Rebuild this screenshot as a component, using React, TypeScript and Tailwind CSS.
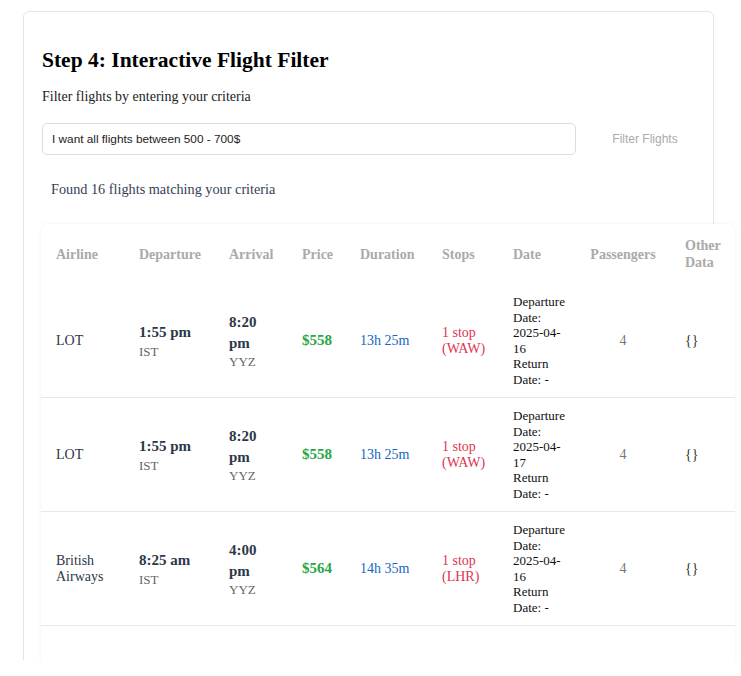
type Flight = {
  airline: string;
  depTime: string;
  depCode: string;
  arrTime: string;
  arrCode: string;
  price: string;
  duration: string;
  stops: string;
  date: string;
  passengers: number;
};

const flights: Flight[] = [
  { airline: 'LOT', depTime: '1:55 pm', depCode: 'IST', arrTime: '8:20 pm', arrCode: 'YYZ', price: '$558', duration: '13h 25m', stops: '1 stop (WAW)', date: '2025-04-16', passengers: 4 },
  { airline: 'LOT', depTime: '1:55 pm', depCode: 'IST', arrTime: '8:20 pm', arrCode: 'YYZ', price: '$558', duration: '13h 25m', stops: '1 stop (WAW)', date: '2025-04-17', passengers: 4 },
  { airline: 'British Airways', depTime: '8:25 am', depCode: 'IST', arrTime: '4:00 pm', arrCode: 'YYZ', price: '$564', duration: '14h 35m', stops: '1 stop (LHR)', date: '2025-04-16', passengers: 4 },
];

const headers = ['Airline', 'Departure', 'Arrival', 'Price', 'Duration', 'Stops', 'Date', 'Passengers', 'Other Data'];
const widths = ['w-[83px]', 'w-[90px]', 'w-[73px]', 'w-[58px]', 'w-[82px]', 'w-[71px]', 'w-[78px]', 'w-[94px]', 'w-[65px]'];

export default function App() {
  return (
    <div className="h-[660px] overflow-hidden bg-white font-['Liberation_Serif',serif]">
      <div className="ml-[23px] mt-[11px] w-[691px] min-h-[700px] rounded-md border border-[#e5e5e5] px-[18px] pt-[36px]">
        <h2 className="text-[21.5px] font-bold leading-[24px] text-black">Step 4: Interactive Flight Filter</h2>
        <p className="mt-[14px] text-[14px] leading-[21px] text-[#222]">Filter flights by entering your criteria</p>

        {/* Filter input */}
        <div className="mt-[16px] flex items-center">
          <input
            className="h-[32px] flex-1 rounded-[5px] border border-[#dcdcdc] pl-[9px] font-['Liberation_Sans',sans-serif] text-[11.8px] text-[#222] outline-none"
            defaultValue="I want all flights between 500 - 700$"
          />
          <button className="ml-[19px] w-[100px] font-['Liberation_Sans',sans-serif] text-[12px] text-[#aaa]">Filter Flights</button>
        </div>

        <p className="mt-[24px] pl-[9px] text-[14.25px] leading-[21px] text-[#334155]">Found 16 flights matching your criteria</p>

        {/* Results table */}
        <div className="relative -ml-px mt-[24px] w-[694px] rounded-t-lg bg-white shadow-[0_0_4px_rgba(0,0,0,0.06)]">
          <table className="w-full table-fixed border-collapse text-left">
            <colgroup>
              {widths.map((w, i) => (
                <col key={i} className={w} />
              ))}
            </colgroup>
            <thead>
              <tr>
                {headers.map((h) => (
                  <th
                    key={h}
                    className={`py-[13px] align-middle text-[14px] font-bold leading-[17px] text-[#aaa] ${h === 'Passengers' ? 'px-[12px] text-center' : 'pl-[15px] pr-[8px]'}`}
                  >
                    {h}
                  </th>
                ))}
              </tr>
            </thead>
            <tbody>
              {flights.map((f, i) => (
                <tr key={i} className="border-b border-[#e8e8e8] align-middle">
                  <td className="py-[10px] pl-[15px] pr-[8px] text-[14px] leading-[16px] text-[#2d3748]">{f.airline}</td>
                  <td className="py-[10px] pl-[15px] pr-[8px]">
                    <div className="text-[15px] font-bold leading-[21px] text-[#2d3748]">{f.depTime}</div>
                    <div className="mt-px text-[13px] leading-[16px] text-[#666]">{f.depCode}</div>
                  </td>
                  <td className="py-[10px] pl-[15px] pr-[8px]">
                    <div className="text-[15px] font-bold leading-[21px] text-[#2d3748]">{f.arrTime}</div>
                    <div className="text-[13px] leading-[16px] text-[#666]">{f.arrCode}</div>
                  </td>
                  <td className="py-[10px] pl-[15px] pr-[8px] text-[15px] font-bold text-[#28a745]">{f.price}</td>
                  <td className="py-[10px] pl-[15px] pr-[8px] text-[14px] text-[#1565c0]">{f.duration}</td>
                  <td className="py-[10px] pl-[15px] pr-[8px] text-[14px] leading-[16px] text-[#e0344f]">{f.stops}</td>
                  <td className="py-[10px] pl-[15px] pr-[8px] text-[13px] leading-[15.5px] text-[#111]">
                    <div>Departure Date: {f.date}</div>
                    <div>Return Date: -</div>
                  </td>
                  <td className="px-[12px] py-[10px] text-center text-[14px] text-[#777]">{f.passengers}</td>
                  <td className="py-[10px] pl-[15px] pr-[8px] text-[14px] text-[#333]">{'{}'}</td>
                </tr>
              ))}
            </tbody>
          </table>
          <div className="h-[60px]" />
        </div>
      </div>
    </div>
  );
}
